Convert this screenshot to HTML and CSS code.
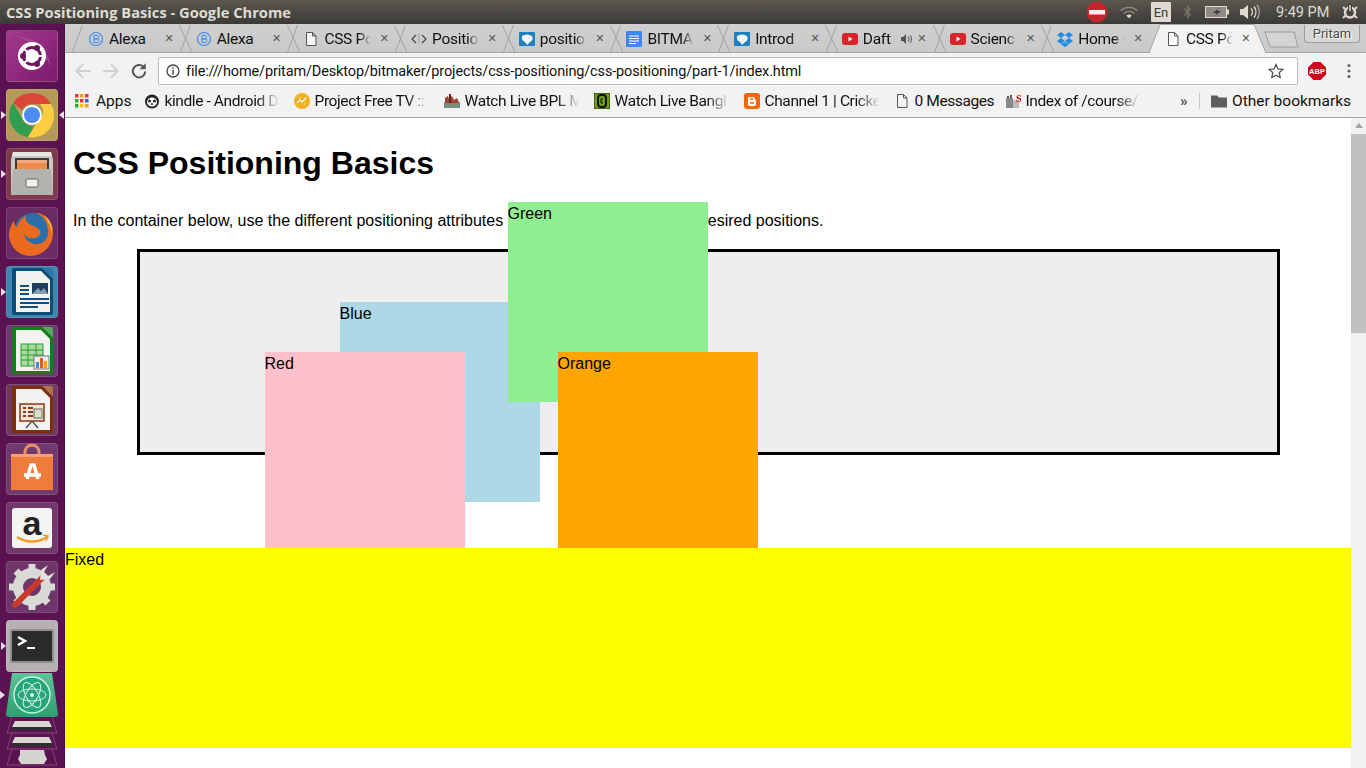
FILE: index.html
```html
<!DOCTYPE html>
<html lang="en">
<head>
  <meta charset="UTF-8">
  <title>CSS Positioning Basics - Google Chrome</title>
  <link rel="stylesheet" href="styles.css">
</head>
<body>
  <header class="panel">
    <span class="panel-title">CSS Positioning Basics - Google Chrome</span>
    <div class="tray">
      <svg class="tray-stop" width="22" height="22" viewBox="0 0 22 22"><circle cx="11" cy="11" r="10.500" fill="#c2262e"/><rect x="3" y="9" width="16" height="4.500" fill="#f4f0ee"/></svg>
      <svg class="tray-wifi" width="18" height="15" viewBox="0 0 20 16"><g fill="none" stroke="#8f8d85" stroke-width="1.500"><path d="M1 6a13 13 0 0 1 18 0"/><path d="M4 9a9 9 0 0 1 12 0"/></g><path d="M7 11.500a4.500 4.500 0 0 1 6 0l-3 3z" fill="#dfdbd2"/></svg>
      <span class="tray-lang">En</span>
      <svg class="tray-bt" width="9" height="16" viewBox="0 0 10 16"><path d="M1 4l7 7-3 3V2l3 3-7 7" fill="none" stroke="#77756d" stroke-width="1.400"/></svg>
      <svg class="tray-batt" width="24" height="12" viewBox="0 0 24 12"><rect x=".5" y=".5" width="21" height="11" fill="#8d8b83" stroke="#dfdbd2"/><rect x="22" y="3.500" width="2" height="5" fill="#dfdbd2"/><path d="M14 2l-6 5h4l-2 3 6-5h-4z" fill="#3c3b37"/></svg>
      <svg class="tray-vol" width="20" height="16" viewBox="0 0 20 16"><path d="M0 5h3l5-4v14l-5-4H0z" fill="#dfdbd2"/><g fill="none" stroke="#dfdbd2" stroke-width="1.400"><path d="M11 4.500a5 5 0 0 1 0 7"/><path d="M14 2.500a9 9 0 0 1 0 11"/><path d="M17 1a12 12 0 0 1 0 14" stroke="#a9a79f"/></g></svg>
      <span class="tray-time">9:49 PM</span>
      <svg class="tray-gear" width="16" height="16" viewBox="0 0 16 16"><circle cx="8" cy="8.500" r="5" fill="none" stroke="#dfdbd2" stroke-width="2.500"/><path d="M8 0v6" stroke="#3f3e39" stroke-width="4"/><path d="M8 1v6" stroke="#dfdbd2" stroke-width="1.600"/><path d="M1 3l2 2M15 3l-2 2M1 14l2-2M15 14l-2-2" stroke="#dfdbd2" stroke-width="2"/></svg>
    </div>
  </header>

  <div class="desktop">
    <nav class="launcher">
      <div class="tile tile-ubuntu"><svg viewBox="0 0 52 52"><path d="M10 6q30 2 36 34-8-24-36-34z" fill="#b659a3" opacity=".5"/><circle cx="26" cy="26" r="14" fill="#fff"/><circle cx="26" cy="26" r="8.500" fill="none" stroke="#6f1560" stroke-width="3"/><g stroke="#fff" stroke-width="2"><path d="M26 26l-9-8M26 26l-9 8M26 26h12"/></g><circle cx="31" cy="18" r="3" fill="#6f1560"/><circle cx="17" cy="26" r="3" fill="#6f1560"/><circle cx="31" cy="34" r="3" fill="#6f1560"/></svg></div>

      <div class="tile tile-chrome pip-both"><svg viewBox="0 0 52 52"><path d="M26 4a22 22 0 0 1 19 11H26a11 11 0 0 0-10 6L7 14A22 22 0 0 1 26 4z" fill="#dc4638"/><path d="M7 14l10 17a11 11 0 0 0 11 6l-6 11A22 22 0 0 1 7 14z" fill="#2f9e50"/><path d="M45 15a22 22 0 0 1-23 33l10-16a11 11 0 0 0 2-17z" fill="#fccd40"/><circle cx="26" cy="26" r="10" fill="#fff"/><circle cx="26" cy="26" r="8" fill="#4c8bf0"/></svg></div>

      <div class="tile tile-files pip-left"><svg viewBox="0 0 52 52"><path d="M7 4h38l2 7v36H5V11z" fill="#c9c9c5"/><path d="M7 4h38l1 4H6z" fill="#e8e8e4"/><rect x="9" y="10" width="34" height="11" fill="#3a3a38"/><rect x="11" y="12" width="30" height="3" fill="#f2a77a"/><rect x="11" y="15" width="30" height="6" fill="#ee8a4c"/><path d="M7 21h38l2 24a2 2 0 0 1-2 2H7a2 2 0 0 1-2-2z" fill="#b2b2ae"/><rect x="20" y="31" width="12" height="8" rx="1" fill="#efefec" stroke="#6b6b68"/></svg></div>

      <div class="tile tile-firefox"><svg viewBox="0 0 52 52"><circle cx="27" cy="25" r="19" fill="#2c6fa8"/><path d="M33 6c9 3 15 11 14 22-1 12-11 21-23 21C13 49 4 40 3 29c0-6 2-12 5-15 0 3 1 5 3 6 1-5 5-9 9-11-1 3 0 6 3 8 4 2 9 3 11 7 1 3-1 6-5 7-5 1-9-1-11-4 1 6 7 11 14 10 7-1 11-7 10-14-1-8-5-15-12-17z" fill="#ea6a1f"/><path d="M38 8c6 4 9 12 8 18-1-6-4-13-8-18z" fill="#f7c843"/></svg></div>

      <div class="tile tile-writer pip-left"><svg viewBox="0 0 52 52"><path d="M36 2h9a2 2 0 0 1 2 2v9z" fill="#2f76a5"/><path d="M8 2h28l11 11v34a2 2 0 0 1-2 2H8a2 2 0 0 1-2-2V4a2 2 0 0 1 2-2z" fill="#0f4c78"/><path d="M10 5h25l9 9v32H10z" fill="#f2f2f0"/><path d="M14 20h9M14 24h9M14 28h9M14 33h29M14 37h29M14 41h18" stroke="#10507e" stroke-width="2"/><rect x="26" y="17" width="16" height="11" fill="#1b3f5e"/><path d="M26 28l6-6 3 3 3-3 4 6z" fill="#889bab"/></svg></div>

      <div class="tile tile-calc"><svg viewBox="0 0 52 52"><path d="M36 2h9a2 2 0 0 1 2 2v9z" fill="#55a85a"/><path d="M8 2h28l11 11v34a2 2 0 0 1-2 2H8a2 2 0 0 1-2-2V4a2 2 0 0 1 2-2z" fill="#0f7f16"/><path d="M10 5h25l9 9v32H10z" fill="#f2f2f0"/><rect x="15" y="19" width="22" height="22" fill="#a9dba0" stroke="#2a9c2e"/><path d="M15 25h22M15 30h22M15 35h22M22 19v22M30 19v22" stroke="#2a9c2e"/><rect x="28" y="31" width="15" height="13" fill="#eee" stroke="#777"/><rect x="30" y="37" width="3" height="6" fill="#3b8fd6"/><rect x="34" y="33" width="3" height="10" fill="#e05a2a"/><rect x="38" y="36" width="3" height="7" fill="#f0a020"/></svg></div>

      <div class="tile tile-impress"><svg viewBox="0 0 52 52"><path d="M36 2h9a2 2 0 0 1 2 2v9z" fill="#b0714f"/><path d="M8 2h28l11 11v34a2 2 0 0 1-2 2H8a2 2 0 0 1-2-2V4a2 2 0 0 1 2-2z" fill="#7d2e0c"/><path d="M10 5h25l9 9v32H10z" fill="#f2f2f0"/><rect x="14" y="20" width="24" height="17" fill="#f3e4d8" stroke="#8a3a12" stroke-width="1.500"/><path d="M17 24h3M22 24h5M17 28h3M22 28h5M17 32h3M22 32h5" stroke="#8a3a12" stroke-width="2"/><rect x="28" y="25" width="8" height="9" fill="#cfe5c4" stroke="#666"/><path d="M26 37l-6 7M26 37l6 7" stroke="#555" stroke-width="1.500"/></svg></div>

      <div class="tile tile-store"><svg viewBox="0 0 52 52"><path d="M19 14v-5a7 7 0 0 1 14 0v5" fill="none" stroke="#e88d65" stroke-width="3"/><path d="M5 11h42v36H5z" fill="#f07c3c"/><path d="M5 11h42v3H5z" fill="#f7a26e"/><path d="M21 36l4-14h3l4 14M18 32h17" fill="none" stroke="#fff" stroke-width="3.500"/></svg></div>

      <div class="tile tile-amazon"><svg viewBox="0 0 52 52"><rect x="6" y="6" width="40" height="40" rx="3" fill="#f4f4f2"/><text x="26" y="33" class="amazon-a">a</text><path d="M11 35c9 6 21 6 30 0" fill="none" stroke="#f29a1f" stroke-width="2.500"/><path d="M37 33l5 1-2 5" fill="none" stroke="#f29a1f" stroke-width="1.500"/></svg></div>

      <div class="tile tile-tools"><svg viewBox="0 0 52 52"><circle cx="26" cy="26" r="14" fill="none" stroke="#d9d9d6" stroke-width="10"/><g stroke="#d9d9d6" stroke-width="7"><path d="M26 3v7M26 42v7M3 26h7M42 26h7M10 10l5 5M42 42l-5-5M10 42l5-5"/></g><path d="M9 44l27-27" stroke="#c9382c" stroke-width="6" stroke-linecap="round"/><path d="M34 19l1-10 7-5-4 7 4 4 7-4-5 7-10 1z" fill="#e2e2df"/></svg></div>

      <div class="tile tile-term pip-left"><svg viewBox="0 0 52 52"><rect x="4" y="9" width="44" height="34" rx="2" fill="#8f8f8c"/><rect x="6" y="11" width="40" height="30" fill="#2b2b2b"/><path d="M12 17l7 4-7 4" fill="none" stroke="#fff" stroke-width="2.500"/><rect x="21" y="27" width="8" height="2" fill="#fff"/></svg></div>

      <div class="tile-atom pip-left"><svg viewBox="0 0 56 44"><defs><linearGradient id="atom-bg" x1="0" y1="0" x2="0" y2="1"><stop offset="0" stop-color="#5cc596"/><stop offset="1" stop-color="#2f9e70"/></linearGradient></defs><path d="M8 0h40l6 41q0 3-3 3H5q-3 0-3-3z" fill="url(#atom-bg)"/><circle cx="28" cy="22" r="18" fill="#26a57a" stroke="#cfeee0" stroke-width="1.500"/><g fill="none" stroke="#d4f2e4"><ellipse cx="28" cy="22" rx="14" ry="6"/><ellipse cx="28" cy="22" rx="14" ry="6" transform="rotate(60 28 22)"/><ellipse cx="28" cy="22" rx="14" ry="6" transform="rotate(120 28 22)"/></g><circle cx="28" cy="22" r="2" fill="#e4f7ee"/></svg></div>

      <svg class="stack" width="56" height="51" viewBox="0 0 56 51"><g fill="none" stroke="#7e4a78"><path d="M8 0L3 16h50L48 0"/><path d="M8 16L3 32h50l-5-16"/><path d="M8 32L3 48h50l-5-16"/></g><path d="M11 4h34l3 6H8z" fill="#d8d8d4"/><rect x="8" y="10" width="40" height="3" fill="#2f2f2f"/><path d="M11 20h34l3 6H8z" fill="#d8d8d4"/><rect x="8" y="26" width="40" height="3" fill="#2f2f2f"/><path d="M16 33h24l1 5 2 4-3 5H17l-3-5 2-4z" fill="#d4d4d0"/></svg>
    </nav>

    <div class="chrome">
      <div class="tabstrip">
        <div class="tab">
          <svg class="favicon" viewBox="0 0 16 16"><circle cx="8" cy="8" r="6.500" fill="none" stroke="#3b8df0" stroke-width="1.200"/><path d="M6 4.500h3a1.700 1.700 0 0 1 0 3.500H6zM6 8h3.500a1.800 1.800 0 0 1 0 3.500H6z" fill="none" stroke="#3b8df0"/></svg>
          <span class="tab-title">Alexa</span><span class="tab-x">✕</span>
        </div>
        <div class="tab">
          <svg class="favicon" viewBox="0 0 16 16"><circle cx="8" cy="8" r="6.500" fill="none" stroke="#3b8df0" stroke-width="1.200"/><path d="M6 4.500h3a1.700 1.700 0 0 1 0 3.500H6zM6 8h3.500a1.800 1.800 0 0 1 0 3.500H6z" fill="none" stroke="#3b8df0"/></svg>
          <span class="tab-title">Alexa</span><span class="tab-x">✕</span>
        </div>
        <div class="tab">
          <svg class="favicon" viewBox="0 0 16 16"><path d="M3.500 1.500h6l3.500 3.500v9.500h-9.500zM9.500 1.500v3.500h3.500" fill="#f4f4f4" stroke="#555"/></svg>
          <span class="tab-title fade">CSS Po</span><span class="tab-x">✕</span>
        </div>
        <div class="tab">
          <svg class="favicon" viewBox="0 0 16 16"><path d="M5 4L1 8l4 4M11 4l4 4-4 4" fill="none" stroke="#444" stroke-width="1.200"/><path d="M8 3v10" stroke="#888" stroke-dasharray="1.500 1"/></svg>
          <span class="tab-title fade">Positio</span><span class="tab-x">✕</span>
        </div>
        <div class="tab">
          <svg class="favicon" viewBox="0 0 16 16"><rect y="1" width="16" height="14" rx="1" fill="#1f7fc0"/><path d="M3 5q5-3 10 0 2 4-2 6l-3 3-2-3q-4-2-3-6z" fill="#f2f6f8"/></svg>
          <span class="tab-title fade">positio</span><span class="tab-x">✕</span>
        </div>
        <div class="tab">
          <svg class="favicon" viewBox="0 0 16 16"><rect width="16" height="16" rx="1" fill="#4285f4"/><path d="M3 5h10M3 7.500h10M3 10h10M3 12.500h7" stroke="#fff"/></svg>
          <span class="tab-title fade">BITMA</span><span class="tab-x">✕</span>
        </div>
        <div class="tab">
          <svg class="favicon" viewBox="0 0 16 16"><rect y="1" width="16" height="14" rx="1" fill="#1f7fc0"/><path d="M3 5q5-3 10 0 2 4-2 6l-3 3-2-3q-4-2-3-6z" fill="#f2f6f8"/></svg>
          <span class="tab-title fade">Introd</span><span class="tab-x">✕</span>
        </div>
        <div class="tab tab-audio">
          <svg class="favicon" viewBox="0 0 16 16"><rect y="2" width="16" height="12" rx="3" fill="#d9252a"/><path d="M6.500 5.500l4 2.500-4 2.500z" fill="#fff"/></svg>
          <span class="tab-title fade">Daft</span>
          <svg class="tab-sound" viewBox="0 0 12 12"><path d="M0 4h2l3-3v10L2 8H0z" fill="#555"/><path d="M7 3.500a3.500 3.500 0 0 1 0 5M9 2a6 6 0 0 1 0 8" fill="none" stroke="#555"/></svg>
          <span class="tab-x">✕</span>
        </div>
        <div class="tab">
          <svg class="favicon" viewBox="0 0 16 16"><rect y="2" width="16" height="12" rx="3" fill="#d9252a"/><path d="M6.500 5.500l4 2.500-4 2.500z" fill="#fff"/></svg>
          <span class="tab-title fade">Scienc</span><span class="tab-x">✕</span>
        </div>
        <div class="tab">
          <svg class="favicon" viewBox="0 0 16 16"><path d="M4 1l4 3-4 3-4-3zM12 1l4 3-4 3-4-3zM4 7l4 3-4 3-4-3zM12 7l4 3-4 3-4-3zM4 13.500l4-2.500 4 2.500-4 2.500z" fill="#1f8ce6"/></svg>
          <span class="tab-title fade">Home -</span><span class="tab-x">✕</span>
        </div>
        <div class="tab tab-active">
          <svg class="tab-shape" viewBox="0 0 118 29"><path d="M0 29L11 .5H105L117 29" fill="#f2f2f2" stroke="#a5a5a5"/></svg>
          <svg class="favicon" viewBox="0 0 16 16"><path d="M3.500 1.500h6l3.500 3.500v9.500h-9.500zM9.500 1.500v3.500h3.500" fill="#fff" stroke="#555"/></svg>
          <span class="tab-title fade">CSS Po</span><span class="tab-x">✕</span>
        </div>
        <svg class="newtab" width="36" height="17" viewBox="0 0 36 17"><path d="M1 1h29l4 15H6z" fill="#d4d4d4" stroke="#9c9c9c"/></svg>
      </div>
      <span class="profile">Pritam</span>

      <div class="toolbar">
        <svg class="tool tool-off" viewBox="0 0 16 16"><path d="M15 8H2M8 2L2 8l6 6" fill="none" stroke="currentColor" stroke-width="1.600"/></svg>
        <svg class="tool tool-off" viewBox="0 0 16 16"><path d="M1 8h13M8 2l6 6-6 6" fill="none" stroke="currentColor" stroke-width="1.600"/></svg>
        <svg class="tool" viewBox="0 0 16 16"><path d="M13.500 8.500a5.500 5.500 0 1 1-1.700-4.300" fill="none" stroke="currentColor" stroke-width="1.800"/><path d="M14 1v5.500H8.500z" fill="currentColor"/></svg>
        <div class="omnibox">
          <svg class="omni-info" viewBox="0 0 14 14"><circle cx="7" cy="7" r="6" fill="none" stroke="#444" stroke-width="1.300"/><path d="M7 6v4.500M7 3.300v1.500" stroke="#444" stroke-width="1.500"/></svg>
          <span class="omni-url">file:///home/pritam/Desktop/bitmaker/projects/css-positioning/css-positioning/part-1/index.html</span>
          <svg class="omni-star" viewBox="0 0 16 16"><path d="M8 1.500l2 4.500 4.800.500-3.600 3.200 1 4.800L8 12.200 3.800 14.500l1-4.800L1.200 6.500 6 6z" fill="none" stroke="#555" stroke-width="1.300"/></svg>
        </div>
        <svg class="abp" viewBox="0 0 18 18"><path d="M5.500 0h7L18 5.500v7L12.500 18h-7L0 12.500v-7z" fill="#d0021b"/><text x="9" y="12" class="abp-text">ABP</text></svg>
        <svg class="menu-dots" viewBox="0 0 4 16"><circle cx="2" cy="2.500" r="1.600" fill="#666"/><circle cx="2" cy="8" r="1.600" fill="#666"/><circle cx="2" cy="13.500" r="1.600" fill="#666"/></svg>
      </div>

      <div class="bookmarks">
        <a class="bm bm-apps"><svg class="favicon" viewBox="0 0 14 14"><g><rect width="3.500" height="3.500" fill="#e33"/><rect x="5" width="3.500" height="3.500" fill="#e9a320"/><rect x="10" width="3.500" height="3.500" fill="#e33"/><rect y="5" width="3.500" height="3.500" fill="#3a3"/><rect x="5" y="5" width="3.500" height="3.500" fill="#e33"/><rect x="10" y="5" width="3.500" height="3.500" fill="#36c"/><rect y="10" width="3.500" height="3.500" fill="#3a3"/><rect x="5" y="10" width="3.500" height="3.500" fill="#fb0"/><rect x="10" y="10" width="3.500" height="3.500" fill="#e9a320"/></g></svg><span>Apps</span></a>
        <a class="bm bm-fade"><svg class="favicon" viewBox="0 0 16 16"><circle cx="8" cy="8.500" r="7" fill="#222"/><ellipse cx="8" cy="9" rx="5" ry="4.500" fill="#fff"/><circle cx="5.500" cy="8" r="1.500" fill="#222"/><circle cx="10.500" cy="8" r="1.500" fill="#222"/><circle cx="8" cy="11" r="1" fill="#222"/></svg><span>kindle - Android D</span></a>
        <a class="bm bm-fade"><svg class="favicon" viewBox="0 0 16 16"><circle cx="8" cy="8" r="8" fill="#f2b01e"/><path d="M3 10l3-3 2 2 4-4M5 5h1M10 11h1" stroke="#fff" stroke-width="1.200" fill="none"/></svg><span>Project Free TV ::</span></a>
        <a class="bm bm-fade"><svg class="favicon" viewBox="0 0 16 16"><rect y="9" width="16" height="6" fill="#7c8a80"/><path d="M1 10V5l3-2 1 3 3-3 2 4 3-2 2 5z" fill="#a04030"/><rect x="5" y="1" width="2" height="9" fill="#5a2a22"/></svg><span>Watch Live BPL M</span></a>
        <a class="bm bm-fade"><svg class="favicon" viewBox="0 0 16 16"><rect width="16" height="16" fill="#6fa00e" stroke="#222"/><rect x="4" y="2" width="8" height="12" rx="3" fill="none" stroke="#111" stroke-width="2"/><path d="M9 6H7v4h2" stroke="#111" fill="none"/></svg><span>Watch Live Bangl</span></a>
        <a class="bm bm-fade"><svg class="favicon" viewBox="0 0 16 16"><rect width="16" height="16" rx="3" fill="#f4670b"/><path d="M5 4h4a2 2 0 0 1 2 2v1h1v4a2 2 0 0 1-2 2H6a2 2 0 0 1-2-2V5z" fill="#fff"/><path d="M6 6h3M6 10h4" stroke="#f4670b" stroke-width="1.500"/></svg><span>Channel 1 | Cricke</span></a>
        <a class="bm bm-msg"><svg class="favicon" viewBox="0 0 16 16"><path d="M3.500 1.500h6l3.500 3.500v9.500h-9.500zM9.500 1.500v3.500h3.500" fill="#f4f4f4" stroke="#555"/></svg><span>0 Messages</span></a>
        <a class="bm bm-fade"><svg class="favicon" viewBox="0 0 16 16"><path d="M1 5h7v10H1z" fill="#888"/><path d="M2 3h2v2H2zM5 2h2v3H5z" fill="#555"/><path d="M8 7h6v8H8z" fill="#bbb"/><text x="11" y="9" class="index-s">S</text></svg><span>Index of /course/</span></a>
        <span class="bm-more">»</span>
        <span class="bm-sep"></span>
        <a class="bm bm-other"><svg class="favicon" viewBox="0 0 16 16"><path d="M0 2.500h6l2 2h8v10H0z" fill="#5f5f5f"/></svg><span>Other bookmarks</span></a>
      </div>

      <div class="viewport">
        <main class="page">
          <h1>CSS Positioning Basics</h1>
          <p>In the container below, use the different positioning attributes to shift the boxes into their desired positions.</p>
          <div class="container">
            <div class="box blue">Blue</div>
            <div class="box red">Red</div>
            <div class="box green">Green</div>
            <div class="box orange">Orange</div>
          </div>
          <div class="fixed">Fixed</div>
        </main>
        <div class="scrollbar">
          <span class="scroll-up"></span>
          <span class="scroll-thumb"></span>
        </div>
      </div>
    </div>
  </div>
</body>
</html>
```

FILE: styles.css
```css
* {
  box-sizing: border-box;
}
html, body {
  margin: 0;
  height: 768px;
  overflow: hidden;
}
body {
  font-family: Roboto, sans-serif;
  background: #fff;
}
svg {
  display: block;
  flex: none;
}

/* ubuntu top panel */
.panel {
  height: 24px;
  display: flex;
  align-items: center;
  justify-content: space-between;
  padding-left: 6px;
  background: linear-gradient(#5a584f, #3b3a36);
  color: #dfdbd2;
}
.panel-title {
  font-family: "Open Sans", sans-serif;
  font-size: 14.700px;
  font-weight: 700;
}
.tray {
  display: flex;
  align-items: center;
  height: 24px;
  padding-right: 8px;
}
.tray-stop { margin-right: 12px; }
.tray-wifi { margin-right: 13px; }
.tray-lang {
  width: 20px;
  height: 20px;
  line-height: 21px;
  text-align: center;
  margin-right: 12px;
  border-radius: 1px;
  background: #dfdbd2;
  color: #3c3b37;
  font-size: 13px;
}
.tray-bt { margin-right: 13px; }
.tray-batt { margin-right: 11px; }
.tray-vol { margin-right: 16px; }
.tray-time {
  width: 52px;
  font-size: 14.500px;
  margin-right: 14px;
  white-space: nowrap;
}

.desktop {
  display: flex;
  height: 744px;
}

/* launcher */
.launcher {
  width: 65px;
  flex: none;
  display: flex;
  flex-direction: column;
  align-items: flex-start;
  overflow: hidden;
  padding: 6px 0 0 6px;
  gap: 7px;
  background: #5a1250;
  border-right: 1px solid #4a0e42;
}
.tile {
  position: relative;
  width: 52px;
  height: 52px;
  flex: none;
  border-radius: 4px;
  border: 1px solid rgba(255, 255, 255, .12);
  background: #7c3f72;
}
.tile svg {
  position: absolute;
  inset: -1px;
  width: 52px;
  height: 52px;
}
.tile-ubuntu { background: linear-gradient(135deg, #a33a8c, #7c1a6c); }
.tile-chrome { background: #b39a58; }
.tile-files { background: #7d3a4a; }
.tile-firefox { background: #6b2c66; }
.tile-writer { background: #3f86ad; }
.tile-calc { background: #6b3a70; }
.tile-impress { background: #6f3a62; }
.tile-store { background: #703a6e; }
.tile-amazon { background: #70386c; }
.tile-tools { background: #6e3568; }
.tile-term { background: #b5b0b2; }
.tile-atom {
  position: relative;
  width: 56px;
  height: 44px;
  flex: none;
  margin: -6px 0 0 -2px;
}
.tile-atom svg {
  width: 56px;
  height: 44px;
}
.stack {
  margin: -7px 0 0 -2px;
}
.pip-left::before,
.pip-both::before,
.pip-both::after {
  content: "";
  position: absolute;
  top: 50%;
  margin-top: -4px;
  border: 4px solid transparent;
}
.pip-left::before,
.pip-both::before {
  left: -6px;
  border-left: 5px solid #e4e0e4;
}
.tile-atom.pip-left::before {
  left: -4px;
}
.pip-both::after {
  right: -7px;
  border-right: 5px solid #e4e0e4;
}
.amazon-a {
  font-family: "Liberation Sans", sans-serif;
  font-size: 34px;
  font-weight: 700;
  text-anchor: middle;
  fill: #222;
}
.abp-text {
  font-family: "Liberation Sans", sans-serif;
  font-size: 7.500px;
  font-weight: 700;
  text-anchor: middle;
  fill: #fff;
}
.index-s {
  font-family: "Liberation Serif", serif;
  font-size: 10px;
  font-weight: 700;
  fill: #d00;
}

/* browser */
.chrome {
  flex: 1;
  min-width: 0;
  position: relative;
  display: flex;
  flex-direction: column;
}
.tabstrip {
  height: 29px;
  flex: none;
  display: flex;
  padding-left: 7px;
  background: #fff linear-gradient(#d0d0d0, #c9c9c9);
  border-bottom: 1px solid #a5a5a5;
}
.tab {
  position: relative;
  width: 107.700px;
  flex: none;
  display: flex;
  align-items: center;
  padding: 1px 0 0 16px;
  font-size: 15.500px;
  color: #111;
}
.tab::before,
.tab::after {
  content: "";
  position: absolute;
  top: 1px;
  bottom: 0;
  width: 1px;
  background: #a3a3a3;
}
.tab::before {
  left: 5px;
  transform: skewX(-20deg);
}
.tab::after {
  left: 113px;
  transform: skewX(25deg);
}
.tab:nth-last-of-type(2)::after,
.tab-active::before,
.tab-active::after {
  display: none;
}
.favicon {
  width: 16px;
  height: 16px;
  flex: none;
}
.tab-title {
  width: 47px;
  margin-left: 5px;
  letter-spacing: -.3px;
  white-space: nowrap;
  overflow: hidden;
}
.fade {
  -webkit-mask-image: linear-gradient(90deg, #000 75%, transparent);
  mask-image: linear-gradient(90deg, #000 75%, transparent);
}
.tab-x {
  width: 12px;
  margin-left: 7px;
  font-family: "DejaVu Sans", sans-serif;
  font-size: 11px;
  text-align: center;
  color: #555;
}
.tab-audio .tab-title {
  width: 37px;
}
.tab-sound {
  width: 12px;
  height: 12px;
  flex: none;
  margin: 0 3px 0 1px;
}
.tab-audio .tab-x {
  margin-left: 0;
}
.tab-active {
  z-index: 1;
  width: 118px;
  padding-bottom: 1px;
  margin-bottom: -1px;
}
.tab-shape {
  position: absolute;
  inset: 0;
  z-index: -1;
  width: 118px;
  height: 29px;
}
.newtab {
  margin: 7px 0 0 -3px;
}
.profile {
  position: absolute;
  top: 1px;
  right: 6px;
  width: 56px;
  height: 18px;
  line-height: 17px;
  text-align: center;
  font-size: 13px;
  color: #4a4a4a;
  text-shadow: 1px 1px 0 #fff;
  background: #d6d6d6;
  border: 1px solid #9c9c9c;
  border-top: 0;
  border-radius: 0 0 4px 4px;
}
.toolbar {
  height: 35px;
  flex: none;
  display: flex;
  align-items: center;
  padding: 1px 13px 0 9px;
  background: #f2f2f2;
}
.tool {
  width: 18px;
  height: 18px;
  flex: none;
  margin-right: 10px;
  color: #555;
}
.tool-off {
  color: #d0d0d0;
}
.omnibox {
  width: 1140px;
  height: 28px;
  flex: none;
  display: flex;
  align-items: center;
  padding: 0 13px 0 7px;
  background: #fff;
  border: 1px solid #bcbcbc;
  border-radius: 2px;
}
.omni-info {
  width: 14px;
  height: 14px;
}
.omni-url {
  margin-left: 6px;
  flex: 1;
  font-size: 14.500px;
  letter-spacing: -.14px;
  color: #111;
  white-space: nowrap;
}
.omni-star {
  width: 16px;
  height: 16px;
}
.abp {
  width: 18px;
  height: 18px;
  margin-left: 10px;
}
.menu-dots {
  width: 4px;
  height: 16px;
  margin-left: 21px;
}
.bookmarks {
  height: 30px;
  flex: none;
  display: flex;
  align-items: center;
  padding: 0 15px 3px 10px;
  background: #f2f2f2;
  border-bottom: 1px solid #a8a8a8;
  font-size: 15.500px;
  color: #111;
}
.bm {
  display: flex;
  align-items: center;
  gap: 5px;
  margin-right: 13px;
  white-space: nowrap;
  flex: none;
}
.bm-apps {
  gap: 7px;
  margin-right: 12px;
}
.bm-apps .favicon {
  width: 14px;
  height: 14px;
}
.bm-fade {
  width: 137px;
  overflow: hidden;
  letter-spacing: -.4px;
  -webkit-mask-image: linear-gradient(90deg, #000 82%, transparent 99%);
  mask-image: linear-gradient(90deg, #000 82%, transparent 99%);
}
.bm-msg {
  width: 98px;
  letter-spacing: -.4px;
}
.bm-more {
  margin-left: auto;
  width: 19px;
  color: #555;
  font-weight: 700;
}
.bm-sep {
  width: 1px;
  height: 16px;
  background: #c8c8c8;
  margin-right: 11px;
}
.bm-other {
  margin-right: 0;
}

/* the page itself */
.viewport {
  flex: 1;
  min-height: 0;
  display: flex;
}
.page {
  position: relative;
  flex: 1;
  min-width: 0;
  padding: 8px;
  overflow: hidden;
  font-family: "Liberation Sans", Arial, sans-serif;
  font-size: 16px;
  line-height: 24px;
  background: #fff;
  color: #000;
}
h1 {
  margin: 19px 0 27px;
  font-size: 32px;
  line-height: 37px;
}
p {
  margin: 0 0 16px;
}
.container {
  position: relative;
  width: 90%;
  height: 206px;
  margin: 0 auto;
  border: 3px solid #000;
  background: #eee;
}
.box {
  position: absolute;
  width: 200px;
  height: 200px;
}
.blue { left: 200px; top: 50px; background: lightblue; }
.red { left: 125px; top: 100px; background: pink; }
.green { left: 368px; top: -50px; background: lightgreen; }
.orange { left: 418px; top: 100px; background: orange; }
.fixed {
  position: absolute;
  left: 0;
  right: 0;
  bottom: 20px;
  height: 200px;
  background: #ff0;
}
.scrollbar {
  width: 15px;
  flex: none;
  padding-top: 5px;
  display: flex;
  flex-direction: column;
  align-items: center;
  background: #f1f1f1;
}
.scroll-up {
  border: 4px solid transparent;
  border-top: 0;
  border-bottom: 5px solid #a3a3a3;
}
.scroll-thumb {
  width: 100%;
  height: 199px;
  margin-top: 6px;
  background: #c1c1c1;
}
```
